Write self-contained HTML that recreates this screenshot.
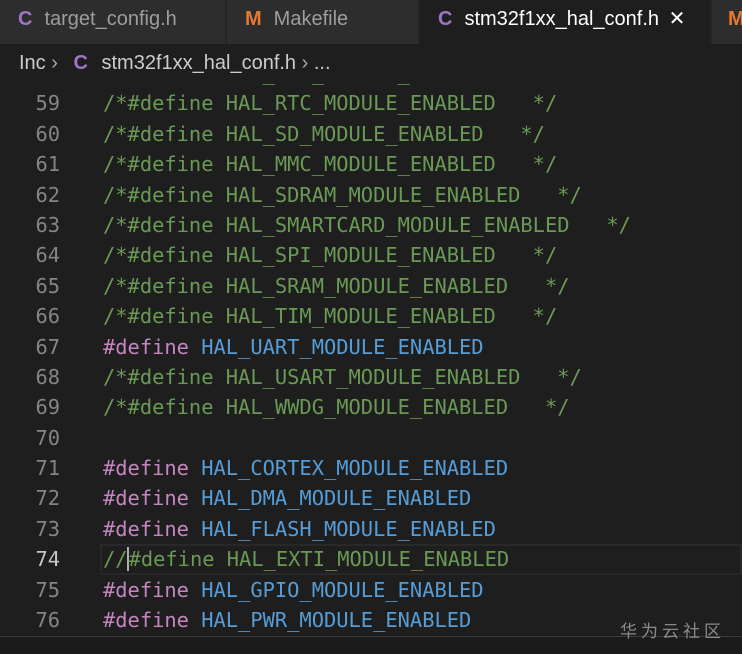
<!DOCTYPE html><html><head><meta charset="utf-8"><style>
body{margin:0;width:742px;height:653px;background:#1e1e1e;overflow:hidden;font-family:"Liberation Sans",sans-serif;position:relative}
.tabs{position:absolute;top:0;left:0;width:742px;height:44px;background:#252526}
.tab{position:absolute;top:0;height:44px;background:#2d2d2d;color:#9d9d9d;font-size:20px;line-height:38px;white-space:nowrap;overflow:hidden}
.tab b{font-weight:bold;margin:0 12px 0 18px}
.bc{position:absolute;top:44px;left:0;width:742px;height:38px;background:#1e1e1e;color:#cccccc;font-size:20px;line-height:38px;padding-left:19px;box-sizing:border-box}
.code{position:absolute;top:58px;left:0;width:742px;font-family:"DejaVu Sans Mono",monospace;font-size:20.4px}
.l{height:30.4px;line-height:30.4px;position:relative;white-space:pre}
.n{position:absolute;left:0;width:60px;text-align:right;color:#858585}
.t{position:absolute;left:103px}
.c{color:#6a9955}.k{color:#c586c0}.m{color:#569cd6}
.cur{position:absolute;left:100px;right:0;top:0;bottom:0;border:2px solid #282828}
</style></head><body>
<div class="tabs">
<div class="tab" style="left:0;width:225px"><b style="color:#a074c4">C</b>target_config.h</div>
<div class="tab" style="left:227px;width:191px"><b style="color:#e37933">M</b>Makefile</div>
<div class="tab" style="left:420px;width:290px;background:#1e1e1e;color:#fff"><b style="color:#a074c4">C</b>stm32f1xx_hal_conf.h <span style="margin-left:4px">✕</span></div>
<div class="tab" style="left:712px;width:40px"><b style="color:#e37933;margin-left:16px">M</b></div>
</div>
<div class="bc">Inc <span style="color:#aaa">›</span> <b style="color:#a074c4;margin:0 8px 0 10px">C</b> stm32f1xx_hal_conf.h <span style="color:#aaa">›</span> ...</div>
<div class="code" style="clip-path:inset(24px 0 0 0)">
<div class="l"><span class="n">58</span><span class="t c">/*#define HAL_PCD_MODULE_ENABLED   */</span></div>
<div class="l"><span class="n">59</span><span class="t c">/*#define HAL_RTC_MODULE_ENABLED   */</span></div>
<div class="l"><span class="n">60</span><span class="t c">/*#define HAL_SD_MODULE_ENABLED   */</span></div>
<div class="l"><span class="n">61</span><span class="t c">/*#define HAL_MMC_MODULE_ENABLED   */</span></div>
<div class="l"><span class="n">62</span><span class="t c">/*#define HAL_SDRAM_MODULE_ENABLED   */</span></div>
<div class="l"><span class="n">63</span><span class="t c">/*#define HAL_SMARTCARD_MODULE_ENABLED   */</span></div>
<div class="l"><span class="n">64</span><span class="t c">/*#define HAL_SPI_MODULE_ENABLED   */</span></div>
<div class="l"><span class="n">65</span><span class="t c">/*#define HAL_SRAM_MODULE_ENABLED   */</span></div>
<div class="l"><span class="n">66</span><span class="t c">/*#define HAL_TIM_MODULE_ENABLED   */</span></div>
<div class="l"><span class="n">67</span><span class="t"><span class="k">#define</span> <span class="m">HAL_UART_MODULE_ENABLED</span></span></div>
<div class="l"><span class="n">68</span><span class="t c">/*#define HAL_USART_MODULE_ENABLED   */</span></div>
<div class="l"><span class="n">69</span><span class="t c">/*#define HAL_WWDG_MODULE_ENABLED   */</span></div>
<div class="l"><span class="n">70</span></div>
<div class="l"><span class="n">71</span><span class="t"><span class="k">#define</span> <span class="m">HAL_CORTEX_MODULE_ENABLED</span></span></div>
<div class="l"><span class="n">72</span><span class="t"><span class="k">#define</span> <span class="m">HAL_DMA_MODULE_ENABLED</span></span></div>
<div class="l"><span class="n">73</span><span class="t"><span class="k">#define</span> <span class="m">HAL_FLASH_MODULE_ENABLED</span></span></div>
<div class="l"><div class="cur"></div><span class="n" style="color:#c6c6c6">74</span><span class="t c">//<span style="border-left:2px solid #aeafad;margin-left:-1px">#</span>define HAL_EXTI_MODULE_ENABLED</span></div>
<div class="l"><span class="n">75</span><span class="t"><span class="k">#define</span> <span class="m">HAL_GPIO_MODULE_ENABLED</span></span></div>
<div class="l"><span class="n">76</span><span class="t"><span class="k">#define</span> <span class="m">HAL_PWR_MODULE_ENABLED</span></span></div>
</div>
<div style="position:absolute;top:636px;left:0;width:742px;height:17px;background:#1b1b1b;border-top:1px solid #3a3a3a"></div>
<div style="position:absolute;left:620px;top:617px;color:#8a8a8a;font-size:17px;letter-spacing:4px;font-family:'Liberation Sans','Noto Sans CJK SC',sans-serif">华为云社区</div>
</body></html>
